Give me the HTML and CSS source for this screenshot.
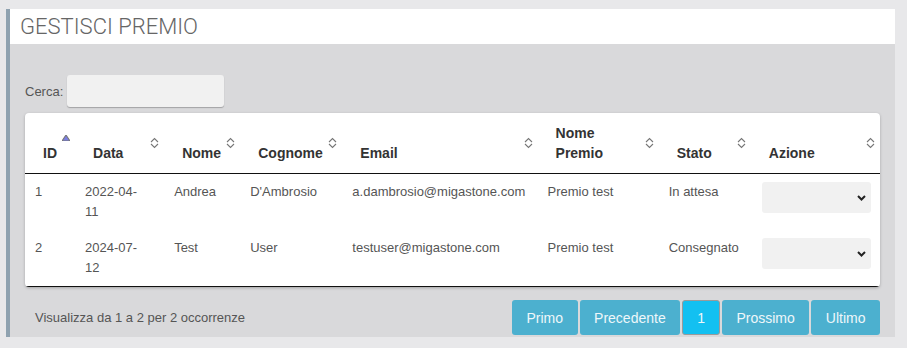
FILE: index.html
```html
<!DOCTYPE html>
<html lang="it">
<head>
    <meta charset="UTF-8">
    <meta name="viewport" content="width=device-width, initial-scale=1.0">
    <title>Gestisci Premio</title>
    <link rel="stylesheet" href="styles.css">
</head>
<body>
    <div class="panel">
        <div class="panel-heading">
            <h2 class="panel-title">GESTISCI PREMIO</h2>
        </div>
        <div class="panel-body">
            <div class="search-row">
                <label for="search">Cerca:</label>
                <input type="search" id="search" class="search-input">
            </div>

            <div class="table-card">
                <table class="data-table">
                    <colgroup>
                        <col style="width: 50px">
                        <col style="width: 89px">
                        <col style="width: 76px">
                        <col style="width: 102px">
                        <col style="width: 195px">
                        <col style="width: 121px">
                        <col style="width: 92px">
                        <col style="width: 129px">
                    </colgroup>
                    <thead>
                        <tr>
                            <th class="sorted-asc">ID
                                <svg class="sort-icon" width="8" height="6" viewBox="0 0 8 6"><polygon points="4,0 8,6 0,6" fill="#7b7ee3"/></svg>
                            </th>
                            <th>Data
                                <svg class="sort-icon" width="9" height="12" viewBox="0 0 9 12"><polyline points="1,5 4.5,1.5 8,5" /><polyline points="1,7 4.5,10.5 8,7" /></svg>
                            </th>
                            <th>Nome
                                <svg class="sort-icon" width="9" height="12" viewBox="0 0 9 12"><polyline points="1,5 4.5,1.5 8,5" /><polyline points="1,7 4.5,10.5 8,7" /></svg>
                            </th>
                            <th>Cognome
                                <svg class="sort-icon" width="9" height="12" viewBox="0 0 9 12"><polyline points="1,5 4.5,1.5 8,5" /><polyline points="1,7 4.5,10.5 8,7" /></svg>
                            </th>
                            <th>Email
                                <svg class="sort-icon" width="9" height="12" viewBox="0 0 9 12"><polyline points="1,5 4.5,1.5 8,5" /><polyline points="1,7 4.5,10.5 8,7" /></svg>
                            </th>
                            <th>Nome Premio
                                <svg class="sort-icon" width="9" height="12" viewBox="0 0 9 12"><polyline points="1,5 4.5,1.5 8,5" /><polyline points="1,7 4.5,10.5 8,7" /></svg>
                            </th>
                            <th>Stato
                                <svg class="sort-icon" width="9" height="12" viewBox="0 0 9 12"><polyline points="1,5 4.5,1.5 8,5" /><polyline points="1,7 4.5,10.5 8,7" /></svg>
                            </th>
                            <th>Azione
                                <svg class="sort-icon" width="9" height="12" viewBox="0 0 9 12"><polyline points="1,5 4.5,1.5 8,5" /><polyline points="1,7 4.5,10.5 8,7" /></svg>
                            </th>
                        </tr>
                    </thead>
                    <tbody>
                        <tr>
                            <td>1</td>
                            <td>2022-04-11</td>
                            <td>Andrea</td>
                            <td>D'Ambrosio</td>
                            <td>a.dambrosio@migastone.com</td>
                            <td>Premio test</td>
                            <td>In attesa</td>
                            <td>
                                <div class="select-wrap">
                                    <select class="action-select"><option></option></select>
                                    <svg class="select-arrow" width="9" height="6" viewBox="0 0 9 6"><polyline points="1,1 4.5,4.5 8,1" /></svg>
                                </div>
                            </td>
                        </tr>
                        <tr>
                            <td>2</td>
                            <td>2024-07-12</td>
                            <td>Test</td>
                            <td>User</td>
                            <td>testuser@migastone.com</td>
                            <td>Premio test</td>
                            <td>Consegnato</td>
                            <td>
                                <div class="select-wrap">
                                    <select class="action-select"><option></option></select>
                                    <svg class="select-arrow" width="9" height="6" viewBox="0 0 9 6"><polyline points="1,1 4.5,4.5 8,1" /></svg>
                                </div>
                            </td>
                        </tr>
                    </tbody>
                </table>
            </div>

            <div class="table-footer">
                <div class="table-info">Visualizza da 1 a 2 per 2 occorrenze</div>
                <div class="pagination">
                    <button class="page-btn">Primo</button>
                    <button class="page-btn">Precedente</button>
                    <button class="page-btn active">1</button>
                    <button class="page-btn">Prossimo</button>
                    <button class="page-btn">Ultimo</button>
                </div>
            </div>
        </div>
    </div>
</body>
</html>
```

FILE: styles.css
```css
body {
    margin: 0;
    padding: 9px 12px 0 6px;
    background-color: #e8e8ea;
    font-family: "Liberation Sans", Arial, sans-serif;
    color: #555;
}

.panel {
    border-left: 4px solid #8fa2b0;
    background-color: #d9d9db;
    height: 328px;
}

.panel-heading {
    background-color: #fff;
    height: 35px;
    padding-left: 10px;
}

.panel-title {
    margin: 0;
    font-family: Roboto, "Liberation Sans", sans-serif;
    font-weight: 300;
    font-size: 22px;
    line-height: 35px;
    color: #666;
}

.panel-body {
    padding: 31px 15px 0 15px;
}

.search-row {
    display: flex;
    align-items: center;
    gap: 4px;
    margin-bottom: 6px;
}

.search-row label {
    font-size: 13px;
    color: #555;
}

.search-input {
    width: 157px;
    height: 32px;
    box-sizing: border-box;
    border: none;
    border-radius: 3px;
    background-color: #f1f1f1;
    box-shadow: 0 1px 1px rgba(0, 0, 0, 0.25);
    outline: none;
}

.table-card {
    background-color: #fff;
    border-radius: 4px;
    box-shadow: 0 1px 3px rgba(0, 0, 0, 0.25);
    overflow: hidden;
}

.data-table {
    width: 100%;
    table-layout: fixed;
    border-collapse: collapse;
    border-bottom: 1px solid #111;
}

.data-table th {
    position: relative;
    padding: 10px 18px 10px 18px;
    text-align: left;
    vertical-align: bottom;
    font-size: 14px;
    font-weight: bold;
    line-height: 20px;
    color: #333;
    border-bottom: 1px solid #111;
}

.sort-icon {
    position: absolute;
    right: 5px;
    top: 50%;
    margin-top: -6px;
    fill: none;
    stroke: #777;
    stroke-width: 1.1;
}

.sorted-asc .sort-icon {
    margin-top: -8px;
    right: 5px;
}

.data-table td {
    padding: 8px 18px 8px 10px;
    vertical-align: top;
    font-size: 13px;
    line-height: 20px;
    color: #555;
}

.data-table td:last-child {
    padding: 8px 9px 8px 11px;
}

.select-wrap {
    position: relative;
}

.action-select {
    display: block;
    width: 100%;
    height: 31px;
    border: none;
    border-radius: 3px;
    background-color: #f1f1f1;
    appearance: none;
    -webkit-appearance: none;
}

.select-arrow {
    position: absolute;
    right: 5px;
    top: 13px;
    fill: none;
    stroke: #222;
    stroke-width: 2;
}

.table-footer {
    display: flex;
    justify-content: space-between;
    align-items: center;
    margin-top: 13px;
}

.table-info {
    padding-left: 10px;
    font-size: 13px;
    color: #555;
}

.pagination {
    display: flex;
    gap: 2px;
}

.page-btn {
    height: 35px;
    padding: 0 13.5px;
    border: 1px solid transparent;
    border-radius: 3px;
    background-color: #4cb0cf;
    color: #eef7fa;
    font-family: "Liberation Sans", Arial, sans-serif;
    font-size: 14px;
    cursor: pointer;
}

.page-btn.active {
    background-color: #13c0f1;
    border-color: #9a9a9a;
    padding: 0 14px;
}
```
